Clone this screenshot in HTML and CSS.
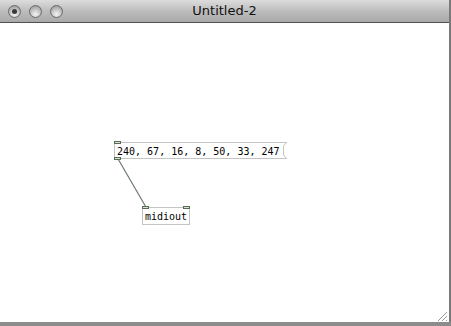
FILE: index.html
```html
<!DOCTYPE html>
<html lang="en">
<head>
    <meta charset="UTF-8">
    <title>Untitled-2</title>
    <link rel="stylesheet" href="styles.css">
</head>
<body>
    <div class="window">
        <div class="titlebar">
            <div class="buttons">
                <span class="btn active"></span>
                <span class="btn"></span>
                <span class="btn"></span>
            </div>
            <div class="title">Untitled-2</div>
        </div>
        <div class="canvas">
            <svg class="wires" width="449" height="300">
                <line x1="117.5" y1="135" x2="146.5" y2="185" stroke="#6e7a6e" stroke-width="1.2"/>
            </svg>

            <div class="box msg" style="left: 114px; top: 119px;">
                <span class="inlet left"></span>
                <span class="outlet left"></span>
                <span class="label">240, 67, 16, 8, 50, 33, 247</span>
                <svg class="flag" width="5" height="17" viewBox="0 0 5 17">
                    <polyline points="0,0.5 4.5,0.5 1.5,4 1.5,13 4.5,16.5 0,16.5" fill="#fff" stroke="#c4c4c4" stroke-width="1"/>
                </svg>
            </div>

            <div class="box obj" style="left: 142px; top: 184px;">
                <span class="inlet left"></span>
                <span class="inlet right"></span>
                <span class="label">midiout</span>
            </div>

            <svg class="grip" width="12" height="12" viewBox="0 0 12 12">
                <line x1="11" y1="2" x2="2" y2="11" stroke="#999" />
                <line x1="11" y1="6" x2="6" y2="11" stroke="#999" />
                <line x1="11" y1="10" x2="10" y2="11" stroke="#999" />
            </svg>
        </div>
    </div>
    <div class="desktop"></div>
</body>
</html>
```

FILE: styles.css
```css
body {
    margin: 0;
    width: 451px;
    height: 326px;
    overflow: hidden;
    background-color: #7a7a7a;
    font-family: "DejaVu Sans", sans-serif;
    position: relative;
}

.window {
    width: 449px;
    height: 322px;
    background-color: #fff;
    display: flex;
    flex-direction: column;
}

.titlebar {
    height: 22px;
    flex-shrink: 0;
    position: relative;
    background: linear-gradient(#dcdcdc, #bdbdbd 50%, #a9a9a9);
    border-bottom: 1px solid #505050;
    display: flex;
    align-items: center;
}

.buttons {
    display: flex;
    gap: 8px;
    margin-left: 8px;
}

.btn {
    width: 13px;
    height: 13px;
    border-radius: 50%;
    box-sizing: border-box;
    border: 1px solid #6a6a6a;
    background: radial-gradient(circle at 50% 75%, #f4f4f4 0, #c8c8c8 45%, #8d8d8d 100%);
    position: relative;
}

.btn.active::after {
    content: "";
    position: absolute;
    left: 3px;
    top: 3px;
    width: 5px;
    height: 5px;
    border-radius: 50%;
    background-color: #3a3a3a;
}

.title {
    position: absolute;
    left: 0;
    right: 0;
    text-align: center;
    font-size: 13px;
    color: #111;
    top: 3px;
}

.canvas {
    flex: 1;
    position: relative;
}

.wires {
    position: absolute;
    left: 0;
    top: 0;
}

.box {
    position: absolute;
    height: 17px;
    box-sizing: border-box;
    background-color: #fff;
    font-family: "DejaVu Sans Mono", monospace;
    font-size: 10px;
    color: #000;
    display: flex;
    align-items: center;
}

.msg {
    border: 1px solid #c4c4c4;
    border-right: none;
    padding-left: 2px;
}

.msg .flag {
    margin-left: 2px;
    margin-top: -1px;
    margin-bottom: -1px;
}

.obj {
    border: 1px solid #c4c4c4;
    padding: 0 2px 0 2px;
    height: 18px;
}

.label {
    line-height: 15px;
    padding-top: 1px;
}

.inlet, .outlet {
    position: absolute;
    width: 7px;
    height: 3px;
    box-sizing: border-box;
    border: 1px solid #5c6a5c;
    background-color: #d2e6c8;
}

.inlet {
    top: -2px;
}

.outlet {
    bottom: -2px;
}

.inlet.left, .outlet.left {
    left: -1px;
}

.inlet.right {
    right: -1px;
}

.grip {
    position: absolute;
    right: 1px;
    bottom: 0;
}

.desktop {
    position: absolute;
    left: 0;
    bottom: 0;
    width: 451px;
    height: 4px;
    background-color: #8c8c8c;
}
```
